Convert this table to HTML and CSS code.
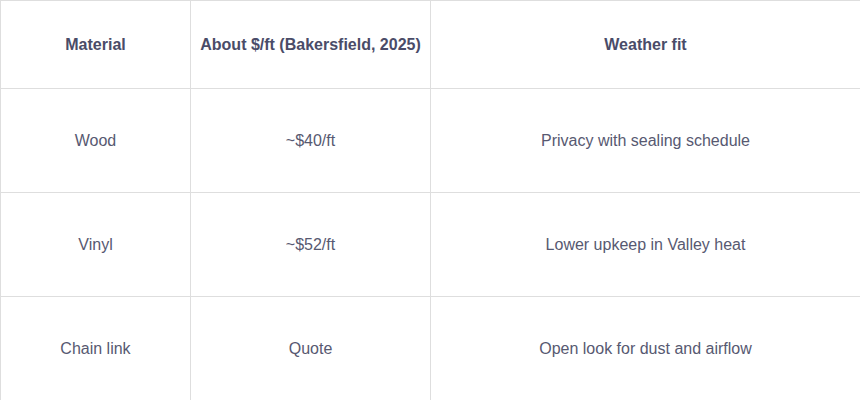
FILE: index.html
```html
<!DOCTYPE html>
<html>
<head>
<meta charset="utf-8">
<link rel="stylesheet" href="styles.css">
</head>
<body>
<table class="grid">
  <colgroup>
    <col class="c1">
    <col class="c2">
    <col class="c3">
  </colgroup>
  <thead>
    <tr class="head">
      <th>Material</th>
      <th>About $/ft (Bakersfield, 2025)</th>
      <th>Weather fit</th>
    </tr>
  </thead>
  <tbody>
    <tr class="row">
      <td>Wood</td>
      <td>~$40/ft</td>
      <td>Privacy with sealing schedule</td>
    </tr>
    <tr class="row">
      <td>Vinyl</td>
      <td>~$52/ft</td>
      <td>Lower upkeep in Valley heat</td>
    </tr>
    <tr class="row">
      <td>Chain link</td>
      <td>Quote</td>
      <td>Open look for dust and airflow</td>
    </tr>
  </tbody>
</table>
</body>
</html>
```
FILE: styles.css
```css
html, body {
  margin: 0;
  padding: 0;
  background: #ffffff;
}
.grid {
  width: 860px;
  border-collapse: collapse;
  table-layout: fixed;
  font-family: "Liberation Sans", Arial, sans-serif;
  font-size: 16px;
}
.c1 { width: 190px; }
.c2 { width: 240px; }
.c3 { width: 430px; }
.grid th, .grid td {
  border: 1px solid #dedede;
  text-align: center;
  vertical-align: middle;
  padding: 0 6px;
  white-space: nowrap;
}
.grid th {
  font-weight: bold;
  color: #4a4c68;
}
.grid td {
  color: #575971;
}
.head th { height: 88px; box-sizing: border-box; }
.row td { height: 104px; box-sizing: border-box; }
```
